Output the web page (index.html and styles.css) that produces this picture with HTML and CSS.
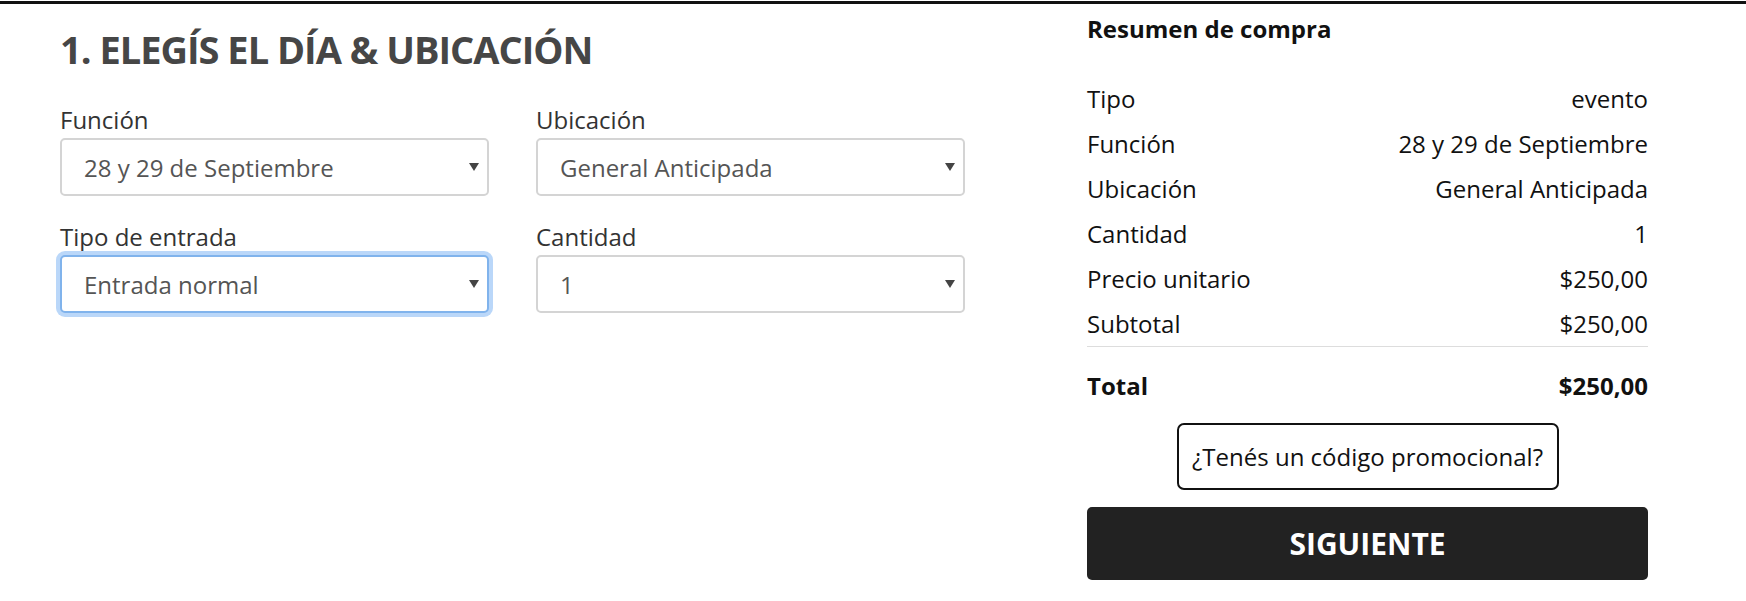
FILE: index.html
```html
<!DOCTYPE html>
<html lang="es">
  <head>
    <meta charset="UTF-8" />
    <meta name="viewport" content="width=device-width, initial-scale=1.0" />
    <title>Compra de entradas</title>
    <link rel="stylesheet" href="styles.css">
  </head>

  <body>
    <div class="topline"></div>

    <main class="page">
      <section class="steps">
        <h1 class="step-title">1. ELEGÍS EL DÍA &amp; UBICACIÓN</h1>

        <form class="fields" id="step-form">
          <div class="field">
            <label for="funcion">Función</label>
            <div class="select-wrap">
              <select id="funcion" name="funcion">
                <option>28 y 29 de Septiembre</option>
              </select>
            </div>
          </div>

          <div class="field">
            <label for="ubicacion">Ubicación</label>
            <div class="select-wrap">
              <select id="ubicacion" name="ubicacion">
                <option>General Anticipada</option>
              </select>
            </div>
          </div>

          <div class="field">
            <label for="tipo">Tipo de entrada</label>
            <div class="select-wrap">
              <select id="tipo" name="tipo" class="is-focused">
                <option>Entrada normal</option>
              </select>
            </div>
          </div>

          <div class="field">
            <label for="cantidad">Cantidad</label>
            <div class="select-wrap">
              <select id="cantidad" name="cantidad">
                <option>1</option>
              </select>
            </div>
          </div>
        </form>
      </section>

      <aside class="summary">
        <h2 class="summary-title">Resumen de compra</h2>

        <dl class="summary-list">
          <div class="summary-row"><dt>Tipo</dt><dd>evento</dd></div>
          <div class="summary-row"><dt>Función</dt><dd>28 y 29 de Septiembre</dd></div>
          <div class="summary-row"><dt>Ubicación</dt><dd>General Anticipada</dd></div>
          <div class="summary-row"><dt>Cantidad</dt><dd>1</dd></div>
          <div class="summary-row"><dt>Precio unitario</dt><dd>$250,00</dd></div>
          <div class="summary-row"><dt>Subtotal</dt><dd>$250,00</dd></div>
        </dl>

        <div class="summary-total">
          <span>Total</span>
          <span>$250,00</span>
        </div>

        <button type="button" class="promo-btn">¿Tenés un código promocional?</button>
        <button type="submit" form="step-form" class="next-btn">SIGUIENTE</button>
      </aside>
    </main>
  </body>
</html>
```

FILE: styles.css
```css
body {
  margin: 0;
  padding: 0;
  font-family: "Open Sans", "Liberation Sans", sans-serif;
  background-color: #fff;
  color: #111;
}

.topline {
  margin-top: 1px;
  border-top: 3px solid #111;
}

.page {
  display: flex;
  padding: 0 98px 0 60px;
}

.steps {
  width: 905px;
}

.step-title {
  margin: 22px 0 0;
  font-size: 38px;
  line-height: 46px;
  font-weight: 700;
  letter-spacing: -1px;
  color: #464646;
}

.fields {
  display: grid;
  grid-template-columns: 1fr 1fr;
  column-gap: 47px;
  row-gap: 27px;
  margin-top: 34px;
}

label {
  display: block;
  font-size: 24px;
  line-height: 28px;
  color: #333;
  margin-bottom: 4px;
}

.select-wrap {
  position: relative;
}

.select-wrap::after {
  content: "";
  position: absolute;
  right: 10px;
  top: 50%;
  margin-top: -4px;
  border-left: 5px solid transparent;
  border-right: 5px solid transparent;
  border-top: 8px solid #444;
  pointer-events: none;
}

select {
  -webkit-appearance: none;
  appearance: none;
  display: block;
  width: 100%;
  height: 58px;
  margin: 0;
  padding: 0 40px 0 22px;
  border: 2px solid #d4d4d4;
  border-radius: 5px;
  background-color: #fff;
  font-family: "Open Sans", sans-serif;
  font-size: 24px;
  color: #555;
}

select.is-focused {
  border-color: #80b3ec;
  box-shadow: 0 0 0 4px #bad7f9;
  outline: none;
}

.summary {
  width: 561px;
  margin-left: auto;
}

.summary-title {
  margin: 10px 0 0;
  font-size: 24px;
  line-height: 30px;
  font-weight: 700;
  color: #111;
}

.summary-list {
  margin: 32px 0 0;
  border-bottom: 1px solid #ddd;
}

.summary-row {
  display: flex;
  justify-content: space-between;
  font-size: 24px;
  line-height: 45px;
}

.summary-row dd {
  margin: 0;
}

.summary-total {
  display: flex;
  justify-content: space-between;
  padding-top: 16px;
  font-size: 24px;
  line-height: 45px;
  font-weight: 700;
}

.promo-btn {
  display: block;
  width: 382px;
  height: 67px;
  margin: 15px auto 0;
  padding: 0;
  border: 2px solid #111;
  border-radius: 7px;
  background-color: #fff;
  font-family: "Open Sans", sans-serif;
  font-size: 24px;
  color: #111;
  cursor: pointer;
}

.next-btn {
  display: block;
  width: 100%;
  height: 73px;
  margin-top: 17px;
  border: none;
  border-radius: 5px;
  background-color: #222;
  color: #fff;
  font-family: "Open Sans", sans-serif;
  font-size: 30px;
  font-weight: 700;
  cursor: pointer;
}

.next-btn:hover {
  background-color: #111;
}
```
